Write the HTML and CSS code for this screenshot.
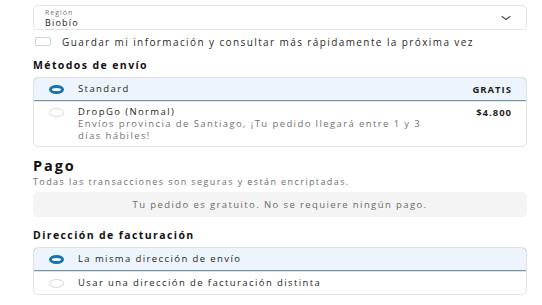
FILE: index.html
```html
<!DOCTYPE html>
<html lang="es">
<head>
<meta charset="UTF-8">
<meta name="viewport" content="width=device-width, initial-scale=1.0">
<title>Checkout</title>
<link rel="stylesheet" href="styles.css">
</head>
<body>

<div class="page">
    <div class="select">
        <div class="select-text">
            <span class="select-label">Región</span>
            <span class="select-value">Biobío</span>
        </div>
        <svg class="chevron" width="12" height="8" viewBox="0 0 12 8"><path d="M2 2.5l4 3 4-3" fill="none" stroke="#555" stroke-width="1.2" stroke-linecap="round" stroke-linejoin="round"/></svg>
    </div>

    <label class="check">
        <span class="check-box"></span>
        Guardar mi información y consultar más rápidamente la próxima vez
    </label>

    <h2 class="section-title">Métodos de envío</h2>
    <div class="options">
        <div class="option selected">
            <span class="radio on"></span>
            <div class="option-body">
                <div class="option-name">Standard</div>
            </div>
            <div class="option-price">GRATIS</div>
        </div>
        <div class="option tall">
            <span class="radio"></span>
            <div class="option-body">
                <div class="option-name">DropGo (Normal)</div>
                <div class="option-desc">Envíos provincia de Santiago, ¡Tu pedido llegará entre 1 y 3 días hábiles!</div>
            </div>
            <div class="option-price">$4.800</div>
        </div>
    </div>

    <h2 class="pay-title">Pago</h2>
    <p class="pay-sub">Todas las transacciones son seguras y están encriptadas.</p>
    <div class="notice">Tu pedido es gratuito. No se requiere ningún pago.</div>

    <h2 class="section-title billing">Dirección de facturación</h2>
    <div class="options">
        <div class="option selected">
            <span class="radio on"></span>
            <div class="option-body">
                <div class="option-name">La misma dirección de envío</div>
            </div>
        </div>
        <div class="option">
            <span class="radio"></span>
            <div class="option-body">
                <div class="option-name">Usar una dirección de facturación distinta</div>
            </div>
        </div>
    </div>
</div>

</body>
</html>
```

FILE: styles.css
```css
* { margin: 0; padding: 0; box-sizing: border-box; }
body { background: #fff; color: #1f1f1f; font-family: "Open Sans", "Noto Sans", sans-serif; font-size: 10px; letter-spacing: 1.4px; }
.page { width: 494px; margin-left: 33px; padding-top: 5px; }

.select { height: 25px; border: 1px solid #e3e3e3; border-radius: 5px; display: flex; align-items: center; justify-content: space-between; padding: 0 14px 0 11px; }
.select-text { display: flex; flex-direction: column; }
.select-label { font-size: 7px; line-height: 9px; color: #777; letter-spacing: 1px; }
.select-value { font-size: 9px; line-height: 11px; color: #222; letter-spacing: 1.2px; }

.check { display: flex; align-items: center; gap: 11px; margin-top: 7px; height: 9px; font-size: 10px; color: #2a2a2a; padding-left: 2px; }
.check-box { width: 16px; height: 9px; border: 1px solid #cfcfcf; border-radius: 2px; }

.section-title { font-size: 10.5px; font-weight: 700; margin-top: 13px; height: 12px; line-height: 12px; color: #111; }
.section-title.billing { margin-top: 12px; }

.options { margin-top: 6px; border: 1px solid #e2e2e2; border-radius: 5px; overflow: hidden; }
.option { display: flex; align-items: center; padding: 0 14px 0 15px; min-height: 23px; }
.option + .option { border-top: 1px solid #e2e2e2; }
.option.selected { background: #eef4fb; border: 1px solid #6f97a6; border-radius: 5px 5px 0 0; margin: -1px -1px 0; min-height: 24px; }
.option.tall { align-items: flex-start; padding-top: 4px; padding-bottom: 4px; }
.option.tall .radio { margin-top: 2px; }
.radio { width: 15px; height: 9px; border-radius: 50%; border: 1px solid #dcdcdc; flex: none; }
.radio.on { border: 3px solid #1773b0; background: #fff; }
.option-body { flex: 1; padding-left: 14px; }
.option-name { font-size: 9.5px; line-height: 12px; }
.option-desc { font-size: 9.5px; color: #727272; line-height: 12px; width: 370px; }
.option-price { font-size: 9.5px; font-weight: 700; letter-spacing: 1px; }

.pay-title { font-size: 14.5px; font-weight: 700; margin-top: 9px; line-height: 20px; color: #111; letter-spacing: 1.9px; }
.pay-sub { font-size: 9px; color: #6e6e6e; margin-top: 0; line-height: 12px; }
.notice { margin-top: 4px; height: 25px; background: #f4f4f4; border-radius: 5px; display: flex; align-items: center; justify-content: center; font-size: 9.5px; color: #6a6a6a; }
```
